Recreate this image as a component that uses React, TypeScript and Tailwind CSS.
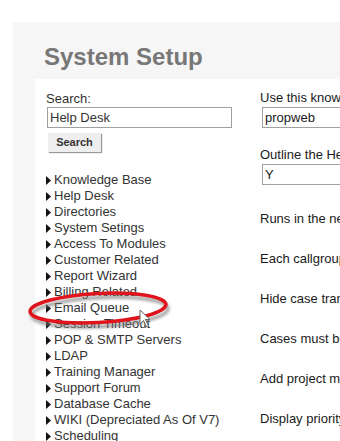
import React from "react";

const menuItems = [
  "Knowledge Base",
  "Help Desk",
  "Directories",
  "System Setings",
  "Access To Modules",
  "Customer Related",
  "Report Wizard",
  "Billing Related",
  "Email Queue",
  "Session Timeout",
  "POP & SMTP Servers",
  "LDAP",
  "Training Manager",
  "Support Forum",
  "Database Cache",
  "WIKI (Depreciated As Of V7)",
  "Scheduling",
];

const settings = [
  { label: "Use this knowledge base", value: "propweb" },
  { label: "Outline the Help Desk", value: "Y" },
  { label: "Runs in the new window" },
  { label: "Each callgroup has" },
  { label: "Hide case transfer" },
  { label: "Cases must be assigned" },
  { label: "Add project manager" },
  { label: "Display priority" },
];

function Arrow() {
  return (
    <svg width="5" height="9" viewBox="0 0 5 9" className="shrink-0">
      <path d="M0 0 L5 4.5 L0 9 Z" fill="#111" />
    </svg>
  );
}

export default function App() {
  return (
    <div
      className="relative h-[441px] w-[340px] overflow-hidden bg-white pl-[13px] pt-[22px]"
      style={{ fontFamily: '"Liberation Sans", Arial, sans-serif' }}
    >
      <div className="h-[500px] bg-[#f6f6f6]">
        <h1 className="pl-[31px] pt-[21px] text-[24px] font-bold leading-[28px] text-[#777]">
          System Setup
        </h1>
        <div className="ml-[22px] mt-[8px] flex h-[400px] bg-white pt-[12px]">
          {/* left column */}
          <div className="w-[225px] shrink-0 pl-[11px]">
            <div className="text-[13px] leading-[16px] text-[#333]">Search:</div>
            <div className="ml-[1px] h-[21px] w-[185px] border border-[#a0a0a0] bg-white px-[2px] text-[13px] leading-[19px] text-[#333]">
              Help Desk
            </div>
            <button className="ml-[2px] mt-[5px] h-[19px] w-[53px] bg-[#eee] text-[11px] font-bold leading-[19px] text-[#333] shadow-[1px_1px_1px_#999]">
              Search
            </button>
            <ul className="mt-[19px]">
              {menuItems.map((item) => (
                <li key={item} className="flex h-[16px] items-center gap-[3px] whitespace-nowrap text-[13px] leading-[16px] text-[#333]">
                  <Arrow />
                  <span>{item}</span>
                </li>
              ))}
            </ul>
          </div>

          {/* right column */}
          <div className="min-w-0 flex-1">
            {settings.map((s, i) => (
              <div key={s.label} className={i === 0 ? "" : i === 1 ? "mt-[20px]" : i === 2 ? "mt-[27px]" : "mt-[26px]"}>
                <div className="whitespace-nowrap text-[13px] leading-[14px] text-[#1a1a1a]">{s.label}</div>
                {s.value && (
                  <div className="ml-[2px] mt-[2px] h-[21px] w-[200px] border border-[#a0a0a0] px-[2px] text-[13px] leading-[19px] text-[#1a1a1a]">
                    {s.value}
                  </div>
                )}
              </div>
            ))}
          </div>
        </div>
      </div>

      {/* annotation ellipse */}
      <svg className="pointer-events-none absolute left-[20px] top-[285px]" width="160" height="50" viewBox="0 0 160 50">
        <defs>
          <filter id="sh" x="-10%" y="-30%" width="130%" height="170%">
            <feGaussianBlur stdDeviation="1.6" />
          </filter>
        </defs>
        <ellipse cx="80" cy="27" rx="68" ry="14.5" transform="rotate(-3 80 27)" fill="none" stroke="#777" strokeWidth="3" filter="url(#sh)" opacity="0.8" />
        <ellipse cx="78" cy="23" rx="68" ry="14.5" transform="rotate(-3 78 23)" fill="none" stroke="#e0141c" strokeWidth="3.6" />
      </svg>

      {/* cursor */}
      <svg className="pointer-events-none absolute left-[139px] top-[309px]" width="14" height="20" viewBox="0 0 14 20">
        <path d="M1 1 L1 15 L4.5 11.5 L7.5 18 L9.5 17 L6.5 10.5 L11 10.5 Z" fill="#fff" stroke="#666" strokeWidth="1" strokeLinejoin="round" />
      </svg>
    </div>
  );
}
